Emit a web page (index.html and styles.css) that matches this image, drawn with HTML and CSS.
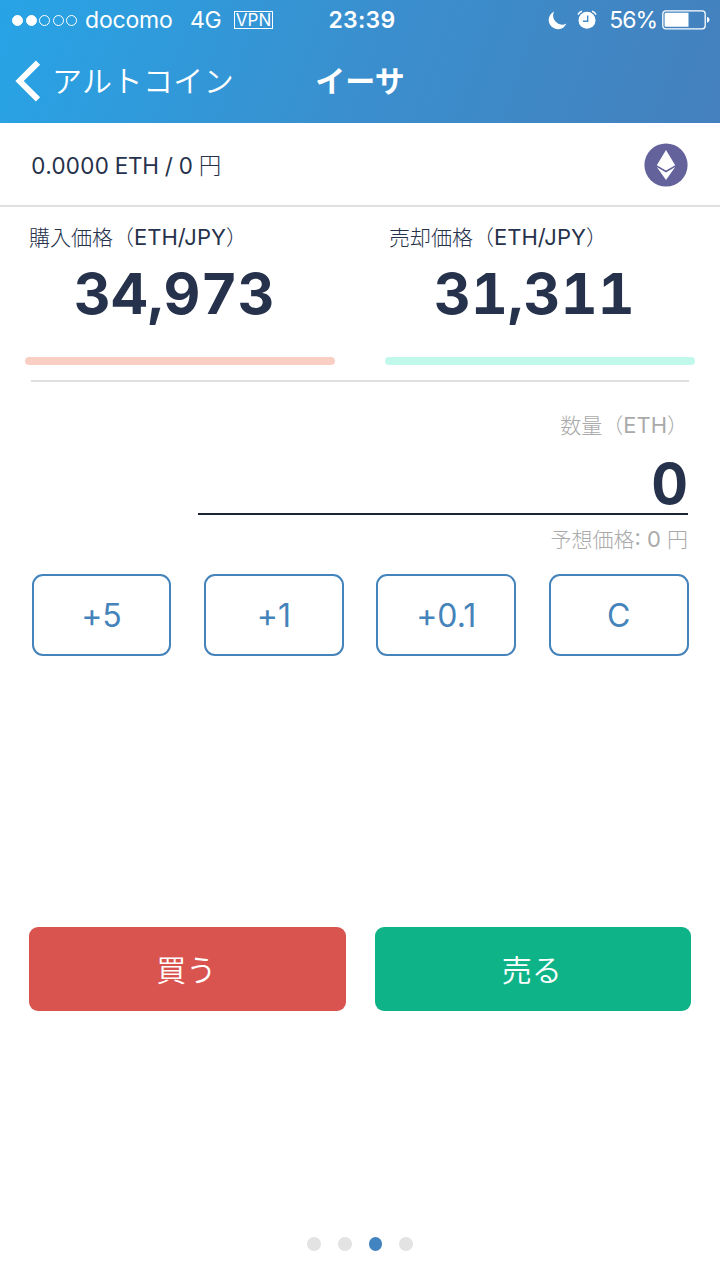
FILE: index.html
```html
<!DOCTYPE html>
<html lang="ja">
<head>
    <meta charset="UTF-8">
    <meta name="viewport" content="width=device-width, initial-scale=1.0">
    <title>イーサ</title>
    <link rel="stylesheet" href="styles.css">
</head>
<body>
    <header class="header">
        <div class="status-bar">
            <div class="status-left">
                <div class="signal">
                    <i class="on"></i><i class="on"></i><i></i><i></i><i></i>
                </div>
                <span class="carrier">docomo</span>
                <span class="network">4G</span>
                <span class="vpn">VPN</span>
            </div>
            <div class="clock">23:39</div>
            <div class="status-right">
                <svg class="moon" width="19" height="19" viewBox="0 0 19 19">
                    <path d="M6.2 0.6A9.2 9.2 0 1 0 18.4 12.6A9 9 0 0 1 6.2 0.6Z" fill="#fff"/>
                </svg>
                <svg class="alarm" width="20" height="20" viewBox="0 0 20 20">
                    <circle cx="10" cy="10.3" r="8.5" fill="#fff"/>
                    <path d="M1 4.6Q2.2 1.9 5 1.2M19 4.6Q17.8 1.9 15 1.2" fill="none" stroke="#fff" stroke-width="1.4"/>
                    <path d="M10.7 5.5V11.3H6" fill="none" stroke="#3f8ac9" stroke-width="1.4"/>
                </svg>
                <span class="percent">56%</span>
                <svg class="battery" width="48" height="20" viewBox="0 0 48 20">
                    <rect x="0.8" y="0.8" width="42.4" height="18" rx="3" fill="none" stroke="#fff" stroke-width="1.3"/>
                    <path d="M4 2.8H26.5V16.8H4Q2.6 16.8 2.6 15.4V4.2Q2.6 2.8 4 2.8Z" fill="#fff"/>
                    <path d="M45 6.8Q47.6 7.6 47.6 9.8T45 12.8Z" fill="#fff"/>
                </svg>
            </div>
        </div>
        <nav class="nav">
            <a class="back">
                <svg width="26" height="42" viewBox="0 0 26 42">
                    <path d="M23 2.6L4.6 21L23 39.4" fill="none" stroke="#fff" stroke-width="6"/>
                </svg>
                <span>アルトコイン</span>
            </a>
            <h1 class="title">イーサ</h1>
        </nav>
    </header>

    <div class="balance">
        <div class="balance-text"><span class="holding">0.0000 ETH / 0 </span>円</div>
        <svg class="coin" width="44" height="44" viewBox="0 0 44 44">
            <circle cx="22" cy="22" r="21.6" fill="#63629a"/>
            <path d="M22 7L31.2 22.2L22 27.6L12.8 22.2Z" fill="#fff"/>
            <path d="M12.8 24L22 29.4L31.2 24L22 37Z" fill="#fff"/>
        </svg>
    </div>

    <div class="prices">
        <div class="price">
            <div class="price-label">購入価格（<span class="pair">ETH/JPY</span>）</div>
            <div class="price-value">34,973</div>
            <div class="price-bar buy-bar"></div>
        </div>
        <div class="price">
            <div class="price-label">売却価格（<span class="pair">ETH/JPY</span>）</div>
            <div class="price-value">31,311</div>
            <div class="price-bar sell-bar"></div>
        </div>
    </div>

    <div class="amount">
        <div class="amount-label">数量（<span class="pair">ETH</span>）</div>
        <div class="amount-value">0</div>
        <div class="estimate">予想価格<span class="pair">: 0 </span>円</div>
    </div>

    <div class="steps">
        <button class="step">+5</button>
        <button class="step">+1</button>
        <button class="step">+0.1</button>
        <button class="step">C</button>
    </div>

    <div class="actions">
        <button class="action buy">買う</button>
        <button class="action sell">売る</button>
    </div>

    <div class="pager">
        <i></i><i></i><i class="active"></i><i></i>
    </div>
</body>
</html>
```
FILE: styles.css
```css
* {
    box-sizing: border-box;
}

body {
    display: flex;
    flex-direction: column;
    width: 720px;
    height: 1280px;
    margin: 0;
    background: #fff;
    font-family: Inter, "Noto Sans CJK JP", sans-serif;
    font-weight: 300;
    color: #26324b;
    overflow: hidden;
}

button {
    font-family: inherit;
    padding: 0;
}

/* Header */
.header {
    height: 123px;
    background: linear-gradient(110deg, #27a4e6 0%, #3a8fce 50%, #4480bd 100%);
    color: #fff;
}

.status-bar {
    display: grid;
    grid-template-columns: 1fr auto 1fr;
    height: 40px;
    padding: 0 10px 0 12px;
    font-size: 23px;
    font-weight: 400;
    line-height: 40px;
}

.status-left,
.status-right {
    display: flex;
    align-items: center;
}

.status-right {
    justify-content: flex-end;
}

.signal {
    display: flex;
    gap: 2.5px;
    margin-right: 8px;
}

.signal i {
    width: 11px;
    height: 11px;
    border: 1px solid #fff;
    border-radius: 50%;
}

.signal .on {
    background: #fff;
}

.carrier {
    width: 105px;
    letter-spacing: -0.2px;
}

.network {
    width: 44px;
    letter-spacing: -0.3px;
}

.vpn {
    width: 39px;
    height: 18px;
    border: 1px solid #fff;
    font-size: 17px;
    line-height: 16px;
    text-align: center;
}

.clock {
    padding-left: 2px;
    font-weight: 600;
    letter-spacing: 0.3px;
}

.alarm {
    margin: 0 12px 0 10px;
}

.percent {
    margin-right: 5px;
    letter-spacing: -1px;
}

.nav {
    display: grid;
    grid-template-columns: 1fr auto 1fr;
    align-items: center;
    height: 82px;
    padding: 0 15px;
}

.back {
    display: flex;
    align-items: center;
    gap: 11px;
    font-size: 30px;
    font-weight: 350;
    letter-spacing: 0.4px;
    line-height: 40px;
}

.title {
    margin: 0;
    font-size: 30px;
    font-weight: 700;
    line-height: 40px;
}

/* Balance row */
.balance {
    display: flex;
    justify-content: space-between;
    align-items: center;
    height: 84px;
    padding: 0 32px 0 31px;
    border-bottom: 2px solid #e0e0e2;
    font-size: 22.5px;
}

.holding {
    font-weight: 400;
    font-variant-numeric: tabular-nums;
    letter-spacing: -0.2px;
    white-space: pre;
}

.coin {
    margin-top: 2px;
}

/* Prices */
.prices {
    display: grid;
    grid-template-columns: 310px 310px;
    column-gap: 50px;
    height: 175px;
    margin: 0 31px;
    border-bottom: 2px solid #e0e0e2;
}

.price {
    margin-left: -6px;
    margin-right: 6px;
    padding-top: 15px;
}

.price-label {
    height: 30px;
    padding-left: 4px;
    font-size: 21px;
    line-height: 30px;
    white-space: nowrap;
}

.pair {
    font-size: 22px;
    font-weight: 400;
    white-space: pre;
}

.price-value {
    height: 84px;
    padding-left: 49px;
    font-size: 57px;
    font-weight: 700;
    font-variant-numeric: tabular-nums;
    letter-spacing: 0.2px;
    line-height: 84px;
}

.price-bar {
    height: 8px;
    margin-top: 21px;
    border-radius: 4px;
}

.buy-bar {
    background: #f9cfc3;
}

.sell-bar {
    background: #c0f8eb;
}

/* Amount */
.amount {
    display: flex;
    flex-direction: column;
    align-items: flex-end;
    padding: 28px 32px 0;
    font-size: 21px;
    line-height: 30px;
    color: #aaa;
}

.amount-label {
    height: 30px;
}

.amount-value {
    width: 490px;
    height: 75px;
    border-bottom: 2px solid #1c2536;
    font-size: 57px;
    font-weight: 700;
    font-variant-numeric: tabular-nums;
    line-height: 88px;
    text-align: right;
    color: #26324b;
}

.estimate {
    height: 30px;
    margin-top: 9px;
}

.steps {
    display: grid;
    grid-template-columns: repeat(4, 1fr);
    column-gap: 32.5px;
    margin: 20px 31.5px 0;
}

.step {
    height: 82px;
    border: 2px solid #4583bb;
    border-radius: 11px;
    background: #fff;
    font-size: 32px;
    font-weight: 400;
    /* keeps the plus sign at its normal height before digits */
    font-feature-settings: "calt" 0;
    color: #4583bb;
}

/* Buy / sell */
.actions {
    display: grid;
    grid-template-columns: 1fr 1fr;
    column-gap: 29px;
    margin: 271px 29px 0;
}

.action {
    height: 84px;
    padding: 0 2px 3px 0;
    border: none;
    border-radius: 9px;
    font-size: 30px;
    font-weight: 350;
    color: #fff;
}

.buy {
    background: #d9534f;
}

.sell {
    background: #0fb388;
}

.pager {
    display: flex;
    justify-content: center;
    gap: 17px;
    margin-top: auto;
    padding-bottom: 29px;
}

.pager i {
    width: 13.7px;
    height: 13.7px;
    border-radius: 50%;
    background: #e3e3e3;
}

.pager .active {
    background: #4284c0;
}
```
